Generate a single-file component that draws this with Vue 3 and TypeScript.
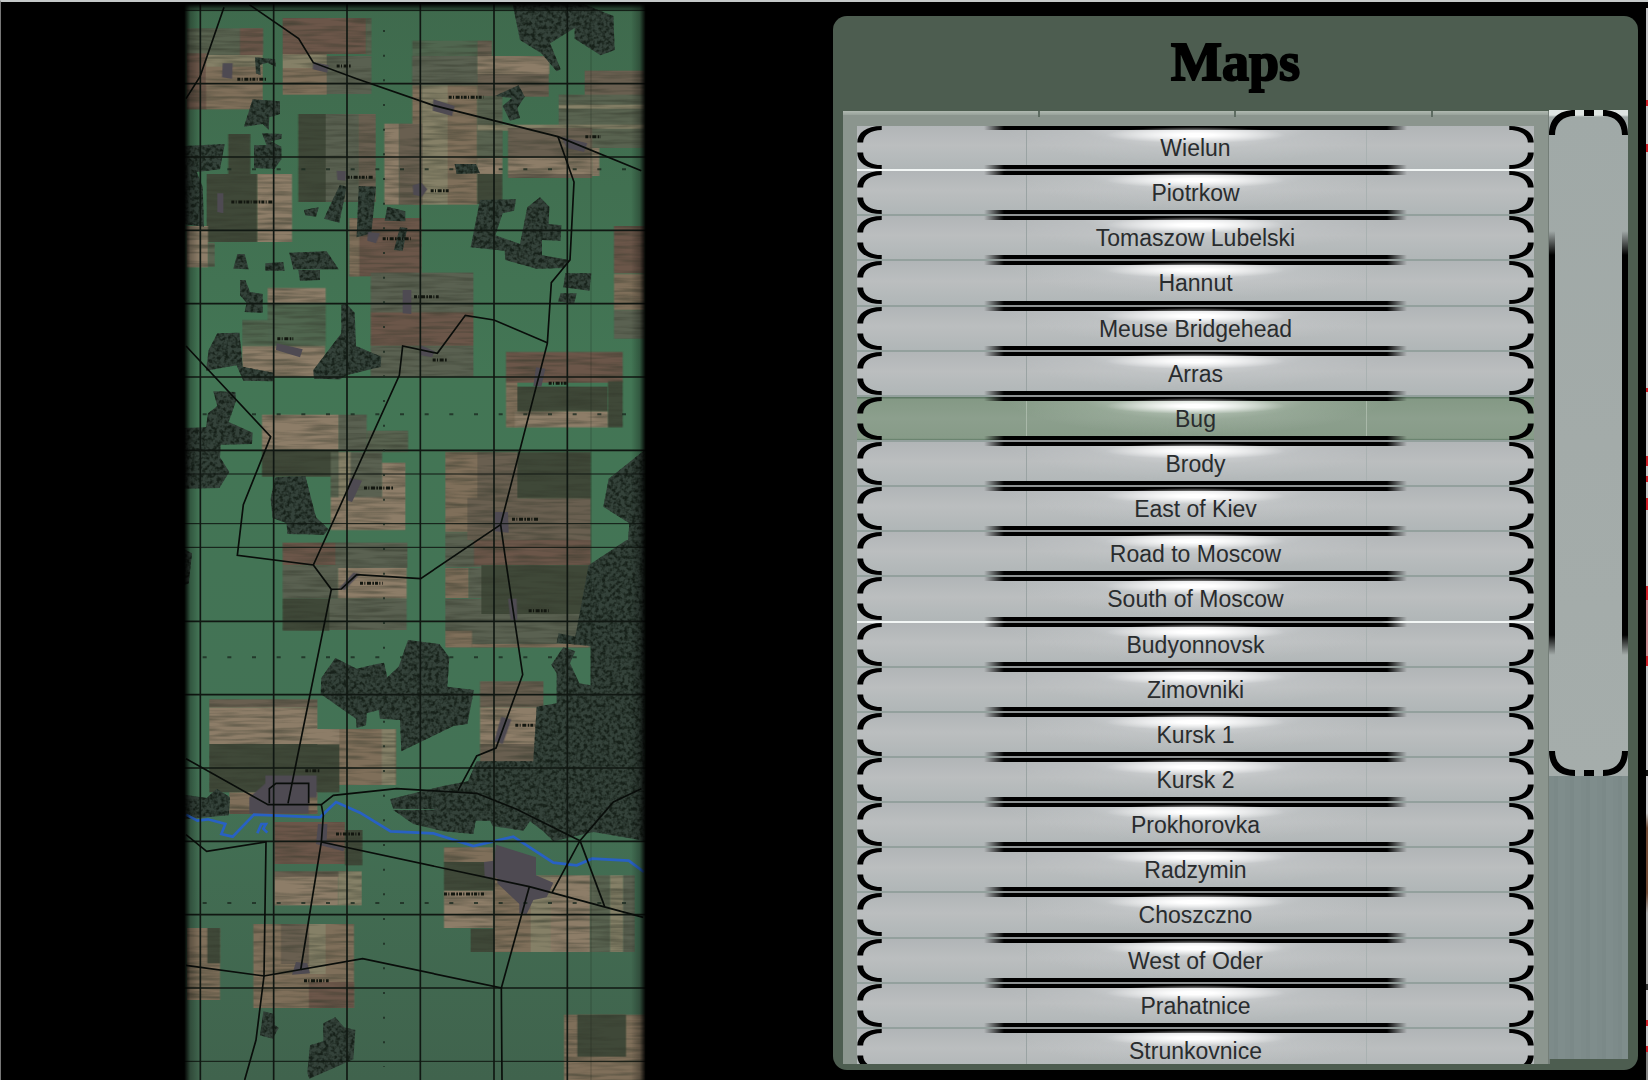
<script setup lang="ts">
import { ref } from 'vue'

const maps: string[] = [
  'Wielun', 'Piotrkow', 'Tomaszow Lubelski', 'Hannut', 'Meuse Bridgehead', 'Arras', 'Bug',
  'Brody', 'East of Kiev', 'Road to Moscow', 'South of Moscow', 'Budyonnovsk', 'Zimovniki',
  'Kursk 1', 'Kursk 2', 'Prokhorovka', 'Radzymin', 'Choszczno', 'West of Oder', 'Prahatnice',
  'Strunkovnice',
]
const selected = ref('Bug')
const brightSeams = new Set<string>(['Wielun', 'South of Moscow'])

// The terrain is charted on four stacked sheets, each 810 units tall.
const SHEET = 810
type Field = [x: number, y: number, w: number, h: number, tone: string]

const tones: Record<string, string> = {
  red: '#6b5649', tan: '#7f6f5a', sand: '#8d7d68', olive: '#596350',
  dark: '#3f4838', moss: '#50664f', brown: '#695f50', pale: '#858067', tile: '#5a6151',
}

const fieldSheets: Field[][] = [
  [
    [20, 85, 230, 80, 'olive'], [180, 85, 68, 80, 'red'], [20, 160, 60, 168, 'red'], [78, 165, 170, 85, 'pale'],
    [78, 200, 170, 128, 'tan'], [308, 54, 250, 108, 'red'], [558, 54, 16, 110, 'olive'],
    [308, 162, 132, 122, 'tan'], [308, 164, 132, 40, 'pale'], [440, 168, 134, 114, 'tile'],
    [355, 342, 82, 264, 'dark'], [437, 342, 98, 264, 'tile'], [535, 342, 52, 264, 'brown'],
    [697, 122, 195, 134, 'moss'], [697, 168, 195, 88, 'tile'], [892, 122, 44, 46, 'brown'],
    [892, 168, 216, 54, 'sand'], [892, 222, 214, 68, 'brown'], [697, 256, 30, 358, 'tan'],
    [727, 256, 76, 358, 'pale'], [803, 256, 89, 358, 'tan'], [613, 371, 44, 243, 'sand'], [657, 371, 70, 243, 'brown'],
    [892, 290, 75, 180, 'olive'], [892, 374, 244, 18, 'pale'], [892, 392, 75, 80, 'olive'], [892, 474, 75, 48, 'sand'],
    [892, 522, 75, 90, 'dark'], [1214, 212, 180, 80, 'brown'], [1136, 284, 258, 160, 'olive'],
    [1136, 314, 258, 12, 'pale'], [1136, 374, 258, 12, 'pale'], [984, 384, 252, 90, 'brown'],
    [984, 474, 252, 48, 'sand'], [984, 522, 252, 12, 'brown'], [1236, 444, 22, 84, 'sand'],
    [145, 402, 66, 120, 'dark'], [80, 522, 152, 204, 'dark'], [232, 522, 104, 204, 'sand'],
    [20, 678, 64, 124, 'sand'], [84, 728, 20, 72, 'olive'],
    [508, 654, 216, 175, 'red'], [508, 654, 30, 175, 'tan'], [1302, 678, 92, 142, 'red'],
  ],
  [
    [263, 54, 174, 44, 'sand'], [263, 98, 174, 130, 'moss'], [187, 150, 80, 78, 'moss'], [187, 228, 248, 92, 'sand'],
    [572, 8, 308, 118, 'tile'], [572, 126, 308, 102, 'red'], [572, 228, 308, 92, 'tile'],
    [1302, 12, 92, 108, 'tan'], [1302, 120, 92, 86, 'tile'],
    [978, 246, 350, 92, 'red'], [978, 338, 34, 134, 'tan'], [1012, 350, 270, 74, 'dark'], [1004, 424, 280, 48, 'sand'],
    [1284, 334, 44, 138, 'dark'], [246, 434, 230, 106, 'sand'], [246, 540, 230, 80, 'dark'],
    [476, 434, 84, 108, 'tile'], [560, 482, 124, 64, 'olive'], [452, 546, 60, 140, 'olive'], [510, 546, 96, 140, 'tile'],
    [476, 546, 36, 140, 'pale'], [606, 578, 70, 110, 'sand'], [452, 682, 224, 98, 'sand'],
    [796, 546, 100, 240, 'tan'], [892, 546, 120, 140, 'brown'], [1012, 546, 220, 138, 'dark'],
    [862, 684, 370, 146, 'brown'], [796, 786, 66, 26, 'olive'],
  ],
  [
    [308, 8, 158, 68, 'red'], [466, 8, 216, 76, 'tile'], [308, 76, 166, 100, 'tile'], [474, 84, 206, 92, 'sand'],
    [308, 176, 140, 96, 'dark'], [448, 176, 232, 94, 'tile'], [796, 0, 110, 82, 'tile'], [882, 0, 350, 76, 'red'],
    [796, 84, 70, 90, 'tan'], [866, 84, 40, 90, 'tile'], [904, 76, 330, 146, 'dark'], [796, 176, 108, 146, 'tile'],
    [904, 222, 330, 100, 'tile'], [796, 272, 80, 50, 'tan'], [876, 312, 350, 10, 'tan'],
    [88, 478, 324, 24, 'brown'], [88, 502, 324, 110, 'sand'], [88, 612, 390, 145, 'dark'], [412, 567, 66, 46, 'sand'],
    [478, 567, 170, 168, 'tan'], [605, 567, 40, 168, 'pale'], [148, 757, 264, 62, 'tan'],
    [900, 424, 190, 78, 'brown'], [900, 502, 174, 110, 'sand'], [900, 612, 170, 70, 'brown'],
  ],
  [
    [148, 0, 264, 12, 'red'], [283, 36, 212, 126, 'red'], [495, 60, 52, 106, 'dark'], [283, 184, 212, 20, 'brown'],
    [283, 200, 192, 86, 'sand'], [475, 184, 70, 102, 'pale'], [792, 112, 148, 44, 'tan'], [792, 156, 148, 86, 'dark'],
    [792, 242, 148, 112, 'sand'], [872, 356, 70, 70, 'dark'], [942, 196, 110, 230, 'tan'], [1052, 196, 60, 230, 'pale'],
    [1112, 196, 118, 230, 'sand'], [1230, 196, 60, 230, 'olive'], [1290, 196, 40, 230, 'pale'], [1330, 196, 34, 230, 'tile'],
    [20, 354, 100, 216, 'tan'], [82, 354, 38, 106, 'dark'], [220, 342, 302, 252, 'tan'], [303, 342, 84, 120, 'brown'],
    [387, 342, 50, 150, 'pale'], [387, 516, 135, 78, 'red'], [1152, 614, 242, 200, 'tan'], [1192, 614, 146, 126, 'dark'],
  ],
]

const woodSheets: string[][] = [
  [
    '998,12 1210,12 1300,48 1304,150 1262,166 1184,116 1184,84 1110,130 1142,208 1130,214 1084,160 1020,120',
    '225,172 285,178 288,200 262,188 240,194 242,226 228,220', '218,298 300,304 300,342 268,352 266,390 248,372 192,380',
    '246,400 306,402 304,416 272,424 304,440 304,478 284,506 222,504 222,436 260,436',
    '12,438 134,432 120,508 50,516 68,560 72,680 12,672', '944,288 1016,256 1034,290 1012,324 1020,354 990,362 968,318 996,294',
    '824,492 888,492 900,520 830,522', '372,630 416,622 408,650 376,646', '480,554 500,560 478,668 432,656 456,604',
    '536,558 588,560 574,700 530,712', '622,620 676,634 676,664 614,662', '900,600 1008,598 1002,632 968,640 946,706 1020,732 1042,622 1080,592 1108,620 1106,672 1144,676 1142,722 1086,720 1086,766 1168,780 1150,804 1070,806 976,780 974,752 872,742',
    '660,682 682,684 668,752 642,750', '328,758 440,754 476,808 340,808', '172,762 194,762 206,808 160,806', '256,790 310,786 314,812 256,812',
  ],
  [
    '355,0 420,0 420,30 360,32', '180,30 196,30 210,66 248,72 248,128 194,126 200,98 180,76', '1156,10 1234,10 1228,62 1150,52',
    '1142,70 1190,70 1182,102 1134,94', '112,190 178,188 188,290 280,308 278,334 190,332 170,286 78,302 86,240',
    '484,104 500,102 524,128 528,228 604,260 602,290 500,316 480,328 402,326 400,300 484,190',
    '100,364 166,366 168,392 146,456 218,488 216,522 122,524 120,562 148,606 118,654 12,656 12,474 78,472 84,430 112,408',
    '286,622 376,618 408,742 446,778 432,794 322,792 320,760 278,744 272,686', '1394,540 1394,830 1340,860 1348,760 1270,710 1286,626',
  ],
  [
    '12,28 36,40 26,130 12,136', '1340,0 1394,0 1394,876 1100,876 1060,842 870,842 760,808 640,806 630,778 790,738 864,724 890,664 1060,664 1070,500 1130,490 1130,400 1114,374 1150,322 1186,334 1170,370 1198,430 1232,436 1232,318 1130,308 1136,280 1186,290 1226,76',
    '684,300 778,312 808,352 802,440 882,450 862,552 820,558 664,634 660,540 600,536 596,510 560,520 558,556 530,564 528,536 422,462 424,414 466,354 530,386 590,372 612,368 622,412 656,380',
    '12,764 80,774 110,746 150,772 146,826 12,838',
  ],
  [
    '640,0 1394,0 1394,92 1240,66 1120,94 1090,64 1050,34 1030,62 938,48 922,14 890,16 880,72 790,64 700,42',
    '250,604 282,612 284,644 296,654 278,686 240,676', '466,622 492,652 526,660 520,748 388,806 382,788 390,706 430,694 430,640',
  ],
]

const roadSheets: string[][] = [
  [
    'M132 22L60 230L18 296', 'M208 14L356 116L400 188L530 236L760 316L1134 410L1384 512', 'M1134 410L1182 546L1170 780L1114 848L1102 1030L962 1574',
  ],
  [
    'M18 228L272 500L190 704L172 856L400 885L454 958L484 957L530 914L722 926L962 764', 'M1102 218L942 150L856 136L772 250L668 228L658 316L400 885',
    'M962 764L974 850L1028 1214L948 1434L890 1458L834 1562',
  ],
  [
    'M454 148L324 790', 'M18 656L264 794H424L460 766L650 746L890 760L1010 808L1200 902', 'M268 790V746L288 730H386V790', 'M1384 746L1300 786L1200 902L1116 1058', 'M424 794L430 826L424 906L362 1290',
  ],
  [
    'M18 74L80 124L258 96L252 498L228 690L194 810', 'M18 466L252 498L548 446L964 534L966 810', 'M424 96L1048 230L1390 322', 'M1048 230L964 534', 'M1200 92L1274 290',
  ],
]

const townSheets: string[][] = [
  ['128,190 158,190 156,236 126,232', '400,186 446,196 442,218 398,208', '760,298 824,318 816,348 758,332', '470,512 498,514 496,542 472,540', '698,556 724,548 742,568 726,590 700,584', '112,580 130,580 130,640 112,636', '564,696 600,700 588,730 562,722', '1144,410 1222,430 1212,456 1160,444'],
  ['668,60 694,60 694,132 668,130', '290,220 368,238 360,262 288,240', '722,226 764,244 756,262 722,256', '1068,292 1096,296 1084,350 1060,348', '510,624 546,632 516,696 498,690', '944,726 984,726 986,788 944,784'],
  ['520,98 540,102 494,150 476,146', '984,176 1010,176 1012,240 992,240', '964,530 994,538 968,612 942,604', '256,706 410,706 410,772 386,772 386,820 208,820 208,772 256,730'],
  ['414,42 442,42 440,94 494,114 490,124 408,102', '948,104 1068,142 1068,196 1120,218 1100,262 1060,270 1040,312 1018,310 1018,282 952,220 952,204 914,200 912,156 942,152', '348,456 382,460 390,490 336,494'],
]

const noteSheets: string[][] = [
  ['M172 238h86', 'M470 198h44', 'M806 292h104', 'M500 532h82', 'M752 572h58', 'M154 606h124', 'M608 716h84', 'M1216 410h46'],
  ['M702 80h74', 'M292 206h48', 'M758 270h44', 'M1106 340h58', 'M552 654h90', 'M996 748h78'],
  ['M540 130h68', 'M1046 212h60', 'M1006 556h60', 'M376 692h42'],
  ['M468 72h72', 'M792 252h120', 'M372 512h74'],
]

const columns = [61, 281, 501, 721, 942, 1162]
const lines = [251, 471, 691, 911, 1131, 1351, 1864, 2084, 2304, 2524, 2744, 2964]
const fineLines = [31, 1422, 1571, 1642, 3184]
const markRows = [508, 1243, 1972, 2709]
</script>

<template>
  <main class="screen">
    <section class="preview" aria-label="Map preview">
      <svg class="terrain" viewBox="0 0 1410 3240" preserveAspectRatio="xMidYMin slice" role="img" aria-label="Bug">
        <defs>
          <filter id="canopy" x="0" y="0" width="100%" height="100%" color-interpolation-filters="sRGB">
            <feTurbulence type="fractalNoise" baseFrequency=".09" numOctaves="2" seed="4" />
            <feColorMatrix values="0 0 0 0 .09  0 0 0 0 .13  0 0 0 0 .1  0 3 0 0 -1.2" result="n" />
            <feComposite in="n" in2="SourceGraphic" operator="in" result="c" />
            <feMerge><feMergeNode in="SourceGraphic" /><feMergeNode in="c" /></feMerge>
          </filter>
          <filter id="soil" x="0" y="0" width="100%" height="100%" color-interpolation-filters="sRGB">
            <feTurbulence type="fractalNoise" baseFrequency=".008 .09" numOctaves="2" seed="9" />
            <feColorMatrix values="0 0 0 0 .2  0 0 0 0 .22  0 0 0 0 .17  0 1.2 0 0 -.48" result="n" />
            <feComposite in="n" in2="SourceGraphic" operator="in" result="c" />
            <feMerge><feMergeNode in="SourceGraphic" /><feMergeNode in="c" /></feMerge>
          </filter>
          <linearGradient id="edge">
            <stop offset="0" stop-color="#000" />
            <stop offset=".009" stop-color="#000" />
            <stop offset=".022" stop-color="#000" stop-opacity=".25" />
            <stop offset=".04" stop-color="#000" stop-opacity="0" />
            <stop offset=".96" stop-color="#000" stop-opacity="0" />
            <stop offset=".978" stop-color="#000" stop-opacity=".25" />
            <stop offset=".991" stop-color="#000" />
          </linearGradient>
          <linearGradient id="top" x2="0" y2="1">
            <stop offset="0" stop-color="#000" />
            <stop offset=".3" stop-color="#000" />
            <stop offset="1" stop-color="#000" stop-opacity="0" />
          </linearGradient>
          <linearGradient id="grass" x2="0" y2="1">
            <stop offset="0" stop-color="#3f6a4d" />
            <stop offset=".35" stop-color="#437655" />
            <stop offset=".7" stop-color="#437255" />
            <stop offset="1" stop-color="#40634d" />
          </linearGradient>
        </defs>
        <rect width="1410" height="3240" fill="url(#grass)" />
        <g filter="url(#soil)">
          <g v-for="(sheet, s) in fieldSheets" :key="s" :transform="`translate(0 ${s * SHEET})`">
            <rect v-for="(f, i) in sheet" :key="i" :x="f[0]" :y="f[1]" :width="f[2]" :height="f[3]" :fill="tones[f[4]]" />
          </g>
        </g>
        <g filter="url(#canopy)" fill="#34423a">
          <g v-for="(sheet, s) in woodSheets" :key="s" :transform="`translate(0 ${s * SHEET})`">
            <polygon v-for="(p, i) in sheet" :key="i" :points="p" />
          </g>
        </g>
        <g fill="#4e4a52">
          <g v-for="(sheet, s) in townSheets" :key="s" :transform="`translate(0 ${s * SHEET})`">
            <polygon v-for="(p, i) in sheet" :key="i" :points="p" />
          </g>
        </g>
        <path class="river" d="M18 2444L52 2462L84 2458L136 2472L124 2502L158 2510L222 2444L420 2452L468 2406L540 2438L632 2494L760 2500L880 2538L1000 2510L1120 2588L1190 2596L1236 2576L1346 2582L1392 2616M232 2500L244 2472H258L250 2486L262 2498" />
        <g stroke="#101712">
          <path v-for="x in columns" :key="x" :d="`M${x} 0V3240`" stroke-width="5" />
          <path d="M1233 0V3240" stroke-width="2" stroke-opacity=".4" />
          <path v-for="y in lines" :key="y" :d="`M0 ${y}H1410`" stroke-width="5" />
          <path v-for="y in fineLines" :key="y" :d="`M0 ${y}H1410`" stroke-width="3" />
        </g>
        <g class="marks">
          <path v-for="y in markRows" :key="y" :d="`M68 ${y}H1390`" stroke-dasharray="12 62" />
          <path d="M612 90V3200" stroke-dasharray="6 68" />
        </g>
        <g class="roads">
          <g v-for="(sheet, s) in roadSheets" :key="s" :transform="`translate(0 ${s * SHEET})`">
            <path v-for="(d, i) in sheet" :key="i" :d="d" />
          </g>
        </g>
        <g class="notes">
          <g v-for="(sheet, s) in noteSheets" :key="s" :transform="`translate(0 ${s * SHEET})`">
            <path v-for="(d, i) in sheet" :key="i" :d="d" />
          </g>
        </g>
        <rect width="1410" height="3240" fill="url(#edge)" />
        <rect width="1410" height="36" fill="url(#top)" />
      </svg>
    </section>

    <section class="panel">
      <h1 class="title">Maps</h1>
      <div class="plate">
        <div class="viewport">
          <ul class="list">
            <li v-for="name in maps" :key="name" :class="{ bright: brightSeams.has(name) }">
              <button type="button" class="entry" :class="{ active: name === selected }" :aria-pressed="name === selected" @click="selected = name">
                <svg class="bracket" viewBox="0 0 26 44" aria-hidden="true">
                  <path d="M25 0V4C14 4 6 9 6 17H0C0 7 9 0 25 0ZM25 44V40C14 40 6 35 6 27H0C0 37 9 44 25 44Z" />
                </svg>
                <span class="name">{{ name }}</span>
                <svg class="bracket" viewBox="0 0 26 44" aria-hidden="true">
                  <path d="M1 0V4C12 4 20 9 20 17H26C26 7 17 0 1 0ZM1 44V40C12 40 20 35 20 27H26C26 37 17 44 1 44Z" />
                </svg>
              </button>
            </li>
          </ul>
        </div>
        <div class="track" role="scrollbar" aria-label="Scroll maps" aria-orientation="vertical" aria-valuenow="0">
          <div class="thumb">
            <svg viewBox="0 0 79 25" aria-hidden="true">
              <path d="M26 0V6C14 6 6 13 6 25H0C0 9 9 0 26 0ZM35 0H45V6H35ZM54 0V6C66 6 73 13 73 25H79C79 9 70 0 54 0Z" />
            </svg>
            <div class="rails"></div>
            <svg viewBox="0 0 79 25" aria-hidden="true">
              <path d="M26 25V19C14 19 6 12 6 0H0C0 16 9 25 26 25ZM35 25H45V19H35ZM54 25V19C66 19 73 12 73 0H79C79 16 70 25 54 25Z" />
            </svg>
          </div>
        </div>
      </div>
    </section>
    <div class="sliver"></div>
  </main>
</template>

<style>
body {
  background: #000;
}
</style>

<style scoped>
.screen {
  box-sizing: border-box;
  display: flex;
  height: 100vh;
  overflow: hidden;
  background: #000;
  border-top: 2px solid #c5c9c9;
  border-left: 1px solid #777;
  font-family: "Liberation Sans", Arial, sans-serif;
}
.preview {
  box-sizing: border-box;
  flex: 1 1 0;
  min-width: 0;
  display: flex;
  justify-content: center;
  padding-right: 4px;
}
.terrain {
  flex: none;
  height: 100vh;
  margin-top: -2px;
}
.river {
  fill: none;
  stroke: #2861c4;
  stroke-width: 8;
}
.roads {
  fill: none;
  stroke: #090d0a;
  stroke-width: 5;
}
.marks {
  fill: none;
  stroke: #1c2a20;
  stroke-width: 6;
  stroke-opacity: .8;
}
.notes {
  fill: none;
  stroke: #12160f;
  stroke-width: 9;
  stroke-dasharray: 9 4 3 5 12 4 5 3;
}
.panel {
  box-sizing: border-box;
  flex: 0 0 805px;
  display: flex;
  flex-direction: column;
  margin: 14px 0 10px;
  padding: 0 10px 6px;
  border-radius: 14px;
  background: #4d5d50;
}
.title {
  margin: 0;
  height: 95px;
  line-height: 92px;
  text-align: center;
  font-family: "Liberation Serif", serif;
  font-size: 54px;
  font-weight: 700;
  color: #000;
  -webkit-text-stroke: 2px #000;
}
.plate {
  flex: 1;
  min-height: 0;
  display: flex;
  gap: 15px;
  background:
    linear-gradient(#747e78, #747e78) 705px 0 / 2px 100% no-repeat,
    linear-gradient(#5e6c62, #5e6c62) 195px 0 / 2px 6px no-repeat,
    linear-gradient(#5e6c62, #5e6c62) 391px 0 / 2px 6px no-repeat,
    linear-gradient(#5e6c62, #5e6c62) 588px 0 / 2px 6px no-repeat,
    linear-gradient(#b0b9b1, #98a29b) 0 0 / 706px 4px no-repeat,
    linear-gradient(90deg, #8b958e 706px, #4d5d50 706px);
}
.viewport {
  flex: 1;
  min-width: 0;
  overflow: hidden;
  padding: 15px 0 0 14px;
}
.list {
  display: grid;
  grid-auto-rows: 1fr;
  height: 948px;
  margin: 0;
  padding: 0;
  list-style: none;
  background: #93a09d;
}
.list li {
  display: flex;
  padding-bottom: 2px;
  background: linear-gradient(90deg, transparent 130px, #8f9394 150px, #8f9394 524px, transparent 544px);
}
.list li.bright {
  background: linear-gradient(90deg, #f2f6f5 130px, #8f9394 150px, #8f9394 524px, #f2f6f5 544px);
}
.entry {
  flex: 1;
  display: flex;
  align-items: stretch;
  justify-content: space-between;
  padding: 0;
  border: 0;
  font: 23px "Liberation Sans", Arial, sans-serif;
  color: #292c2e;
  cursor: pointer;
  --bar: transparent 127px, #000 147px, #000 calc(100% - 147px), transparent calc(100% - 127px);
  background:
    radial-gradient(ellipse 90px 8px at 50% 9px, #fff 20%, rgba(255, 255, 255, 0)) no-repeat,
    linear-gradient(90deg, var(--bar)) 0 0 / 100% 4px no-repeat,
    linear-gradient(90deg, var(--bar)) 0 100% / 100% 4px no-repeat,
    linear-gradient(#9aa3a3, #9aa3a3) 169px 0 / 1px 100% no-repeat,
    linear-gradient(#a9b1b1, #a9b1b1) 509px 0 / 1px 100% no-repeat,
    radial-gradient(ellipse 190px 38px at 50% 0, rgba(240, 241, 243, .85), rgba(205, 208, 210, .3) 60%, rgba(190, 194, 196, 0)),
    linear-gradient(#b1b5b7, #bbbebf 45%, #b0b6b7);
}
.entry.active {
  background:
    radial-gradient(ellipse 90px 8px at 50% 9px, #fff 20%, rgba(255, 255, 255, 0)) no-repeat,
    linear-gradient(90deg, var(--bar)) 0 0 / 100% 4px no-repeat,
    linear-gradient(90deg, var(--bar)) 0 100% / 100% 4px no-repeat,
    linear-gradient(#a9b8a9, #a9b8a9) 169px 0 / 1px 100% no-repeat,
    linear-gradient(#a9b8a9, #a9b8a9) 509px 0 / 1px 100% no-repeat,
    radial-gradient(ellipse 190px 38px at 50% 0, rgba(230, 238, 230, .85), rgba(180, 194, 180, .3) 60%, rgba(160, 176, 160, 0)),
    linear-gradient(#5f7a65 1px, #849985 2px, #8c9f8d 50%, #879b88 96%, #5f7a65);
}
.bracket {
  flex: none;
  width: 26px;
  height: 43px;
}
.name {
  align-self: center;
  padding-top: 2px;
}
.track {
  flex: 0 0 79px;
  margin: -1px 0 5px 0;
  background: repeating-linear-gradient(90deg, #7d8b8a 0 5px, #7b8988 5px 9px, #7f8d8c 9px 16px);
}
.thumb {
  display: flex;
  flex-direction: column;
  height: 70.2%;
  background: linear-gradient(#dfe5e2 0, #dfe5e2 5px, #a0a9a7 7px, #a3aba9 50%, #a5adab);
}
.thumb svg {
  flex: none;
  display: block;
  height: 25px;
}
.rails {
  flex: 1;
  margin: 96px 0;
  --rail: transparent, #000 24px, #000 calc(100% - 20px), transparent;
  background:
    linear-gradient(var(--rail)) 0 0 / 6px 100% no-repeat,
    linear-gradient(var(--rail)) 100% 0 / 6px 100% no-repeat;
}
.sliver {
  flex: 0 0 2px;
  margin: 6px 0 0 8px;
  background: linear-gradient(
    #c9c9cb 92px, #d0222b 92px 98px, #c9c9cb 98px 136px, #d0222b 136px 144px,
    #c9c9cb 144px 380px, #d0222b 380px 384px, #c9c9cb 384px 448px, #d0222b 448px 458px,
    #c9c9cb 458px 468px, #d0222b 468px 474px, #c9c9cb 474px 490px, #d0222b 490px 502px,
    #c9c9cb 502px 578px, #d0222b 578px 592px, #c98e92 592px 648px, #d0222b 648px 658px,
    #c9c9cb 658px 762px, #111 762px 768px, #c9c9cb 768px 805px, #6f4a35 820px 885px, #aaa 905px 976px,
    #333 976px 982px, #c9c9cb 982px 1012px, #d0222b 1012px 1018px, #c9c9cb 1018px 1038px, #d0222b 1038px 1044px, #888 1044px
  );
}
</style>
